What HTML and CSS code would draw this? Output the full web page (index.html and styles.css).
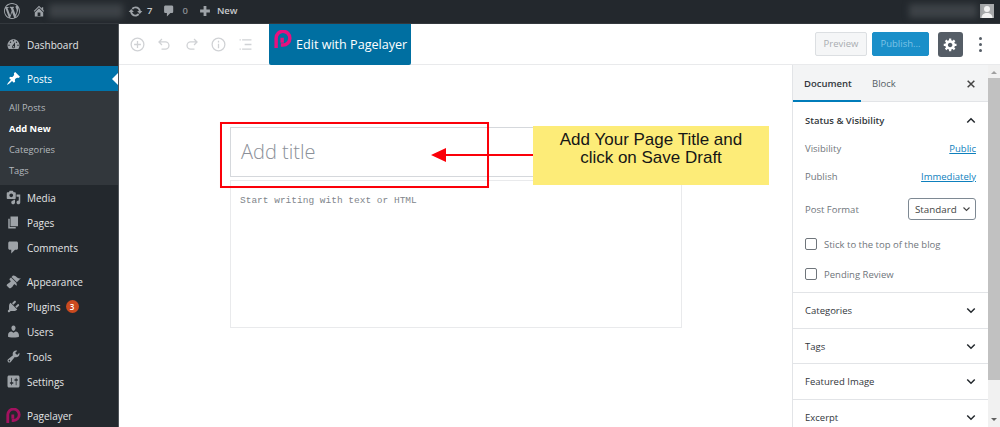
FILE: index.html
```html
<!DOCTYPE html>
<html lang="en">
<head>
<meta charset="utf-8">
<title>Add New Post</title>
<link rel="stylesheet" href="styles.css">
</head>
<body>
<header class="adminbar">
  <svg class="ab-wp" viewBox="0 0 20 20"><path d="M20 10c0-5.51-4.49-10-10-10C4.48 0 0 4.49 0 10c0 5.52 4.48 10 10 10 5.51 0 10-4.48 10-10zM7.78 15.37L4.37 6.22c.55-.02 1.17-.08 1.17-.08.5-.06.44-1.13-.06-1.11 0 0-1.45.11-2.37.11-.18 0-.37 0-.58-.01C4.12 2.69 6.87 1.11 10 1.11c2.33 0 4.45.87 6.05 2.34-.68-.11-1.65.39-1.65 1.58 0 .74.45 1.36.9 2.1.35.61.55 1.36.55 2.46 0 1.49-1.4 5-1.4 5l-3.03-8.37c.54-.02.82-.17.82-.17.5-.05.44-1.25-.06-1.22 0 0-1.44.12-2.38.12-.87 0-2.33-.12-2.33-.12-.5-.03-.56 1.2-.06 1.22l.92.08 1.26 3.41zM17.41 10c.24-.64.74-1.87.43-4.25.7 1.29 1.05 2.71 1.05 4.25 0 3.29-1.73 6.24-4.4 7.78.97-2.59 1.94-5.2 2.92-7.78zM6.1 18.09C3.12 16.65 1.11 13.53 1.11 10c0-1.3.23-2.48.72-3.59C3.25 10.3 4.67 14.2 6.1 18.09zm4.03-6.63l2.58 6.98c-.86.29-1.76.45-2.71.45-.79 0-1.57-.11-2.29-.33.81-2.38 1.62-4.74 2.42-7.1z"/></svg>
  <svg class="ab-home" viewBox="0 0 20 20"><path d="M16 8.5l1.53 1.53-1.06 1.06L10 4.62l-6.47 6.47-1.06-1.06L10 2.5l4 4v-2h2v4zm-6-2.46l6 5.99V18H4v-5.97zM12 17v-5H8v5h4z"/></svg>
  <span class="ab-blur ab-blur-site"></span>
  <svg class="ab-update" viewBox="0 0 20 20"><path d="M10.2 3.28c3.53 0 6.43 2.61 6.92 6h2.08l-3.5 4-3.5-4h2.32c-.45-1.97-2.21-3.45-4.32-3.45-1.45 0-2.73.71-3.54 1.78L4.95 5.66C6.23 4.2 8.11 3.28 10.2 3.28zm-.4 13.44c-3.52 0-6.43-2.61-6.92-6H.8l3.5-4c1.17 1.33 2.33 2.67 3.5 4H5.48c.45 1.97 2.21 3.45 4.32 3.45 1.45 0 2.73-.71 3.54-1.78l1.71 1.95c-1.28 1.46-3.15 2.38-5.25 2.38z"/></svg>
  <span class="ab-text ab-count">7</span>
  <svg class="ab-comment" viewBox="0 0 20 20"><path d="M5 2h9c1.1 0 2 .9 2 2v7c0 1.1-.9 2-2 2h-2l-5 5v-5H5c-1.1 0-2-.9-2-2V4c0-1.1.9-2 2-2z"/></svg>
  <span class="ab-text ab-zero">0</span>
  <svg class="ab-plus" viewBox="0 0 20 20"><path d="M8 3h4v5h5v4h-5v5H8v-5H3V8h5z"/></svg>
  <span class="ab-text ab-new">New</span>
  <span class="ab-spacer"></span>
  <span class="ab-blur ab-blur-user"></span>
  <span class="ab-avatar"><svg viewBox="0 0 14 14"><circle cx="7" cy="5" r="3"/><path d="M1.5 14c0-3.5 2.5-5 5.500-5s5.500 1.500 5.500 5z"/></svg></span>
</header>
<div class="layout">
  <nav class="sidebar">
    <ul class="menu">
      <li class="item item-first"><svg class="mi" viewBox="0 0 20 20"><path d="M3.76 16h12.48c1.1-1.37 1.76-3.11 1.76-5 0-4.420-3.58-8-8-8s-8 3.58-8 8c0 1.89.66 3.63 1.76 5zM10 4c.55 0 1 .45 1 1s-.45 1-1 1-1-.45-1-1 .45-1 1-1zM6 6c.55 0 1 .45 1 1s-.45 1-1 1-1-.45-1-1 .45-1 1-1zm8 0c.55 0 1 .45 1 1s-.45 1-1 1-1-.45-1-1 .45-1 1-1zm-5.370 5.550L12 7v6c0 1.100-.9 2-2 2s-2-.9-2-2c0-.57.24-1.080.63-1.450zM4 10c.55 0 1 .45 1 1s-.45 1-1 1-1-.45-1-1 .45-1 1-1zm12 0c.55 0 1 .45 1 1s-.45 1-1 1-1-.45-1-1 .45-1 1-1zm-5 3c0-.55-.45-1-1-1s-1 .45-1 1 .45 1 1 1 1-.45 1-1z"/></svg>Dashboard</li>
      <li class="item item-active"><svg class="mi" viewBox="0 0 20 20"><path d="M10.440 3.020l1.820-1.820 6.360 6.350-1.830 1.820c-1.050-.68-2.480-.57-3.410.36l-.75.75c-.92.93-1.040 2.350-.35 3.410l-1.830 1.820-2.410-2.410-2.800 2.790c-.42.42-3.380 2.710-3.800 2.290s1.860-3.390 2.280-3.810l2.790-2.790L4.100 9.360l1.830-1.820c1.050.69 2.480.57 3.400-.36l.75-.75c.93-.92 1.050-2.350.36-3.410z"/></svg>Posts</li>
      <li class="submenu">
        <span class="sub">All Posts</span>
        <span class="sub sub-current">Add New</span>
        <span class="sub">Categories</span>
        <span class="sub">Tags</span>
      </li>
      <li class="item"><svg class="mi" viewBox="0 0 20 20"><path d="M13 11V4c0-.55-.45-1-1-1h-1.670L9 1H5L3.670 3H2c-.55 0-1 .45-1 1v7c0 .55.45 1 1 1h10c.55 0 1-.45 1-1zM7 4.500c1.380 0 2.500 1.120 2.500 2.500S8.380 9.500 7 9.500 4.500 8.380 4.500 7 5.620 4.500 7 4.500zM14 6h5v10.500c0 1.380-1.120 2.500-2.500 2.500S14 17.880 14 16.500s1.120-2.500 2.500-2.500c.17 0 .34.02.5.05V9h-3V6zm-4 8.050V13h2v3.500c0 1.380-1.120 2.500-2.500 2.500S7 17.880 7 16.500 8.120 14 9.500 14c.17 0 .34.02.5.05z"/></svg>Media</li>
      <li class="item"><svg class="mi" viewBox="0 0 20 20"><path d="M6 15V2h10v13H6zm-1 1h8v2H3V5h2v11z"/></svg>Pages</li>
      <li class="item"><svg class="mi" viewBox="0 0 20 20"><path d="M5 2h9c1.100 0 2 .9 2 2v7c0 1.100-.9 2-2 2h-2l-5 5v-5H5c-1.100 0-2-.9-2-2V4c0-1.100.9-2 2-2z"/></svg>Comments</li>
      <li class="item item-group"><svg class="mi" viewBox="0 0 20 20"><path d="M14.480 11.060L7.410 3.990l1.500-1.500c.5-.56 2.300-.47 3.510.32 1.210.8 1.430 1.280 2.910 2.100 1.180.64 2.450 1.260 4.450.85zm-.71.71L6.700 4.700 4.930 6.470c-.39.39-.39 1.020 0 1.410l1.060 1.060c.39.39.39 1.030 0 1.420-.6.6-1.430 1.110-2.210 1.690-.35.26-.7.53-1.010.84C1.430 13.230.4 14.850 1.100 15.550l3.360 3.360c.7.7 2.320-.33 3.660-1.670.31-.31.58-.66.84-1.010.58-.78 1.090-1.610 1.690-2.210.39-.39 1.030-.39 1.420 0l1.060 1.060c.39.39 1.020.39 1.410 0z"/></svg>Appearance</li>
      <li class="item"><svg class="mi" viewBox="0 0 20 20"><path d="M13.110 4.360L9.870 7.600 8 5.730l3.240-3.240c.35-.34 1.050-.2 1.560.32.52.51.66 1.210.31 1.550zm-8 1.770l.91-1.120 9.010 9.010-1.190.84c-.71.71-2.630 1.160-3.820 1.160H6.140L4.900 17.260c-.59.59-1.540.59-2.120 0-.59-.58-.59-1.530 0-2.120l1.240-1.240v-3.880c0-1.130.4-3.190 1.090-3.890zm7.260 3.970l3.240-3.240c.34-.35 1.040-.21 1.550.31.52.51.66 1.210.31 1.550l-3.240 3.250z"/></svg>Plugins<span class="badge">3</span></li>
      <li class="item"><svg class="mi" viewBox="0 0 20 20"><path d="M10 9.250c-2.270 0-2.730-3.440-2.730-3.440C7 4.020 7.820 2 9.970 2c2.160 0 2.980 2.020 2.710 3.810 0 0-.41 3.440-2.680 3.440zm0 2.570L12.720 10c2.390 0 4.520 2.330 4.520 4.530v2.490s-3.650 1.130-7.240 1.130c-3.650 0-7.240-1.130-7.240-1.130v-2.490c0-2.250 1.940-4.480 4.470-4.480z"/></svg>Users</li>
      <li class="item"><svg class="mi" viewBox="0 0 20 20"><path d="M16.680 9.770c-1.340 1.340-3.300 1.670-4.950.99l-5.410 6.520c-.99.99-2.590.99-3.580 0s-.99-2.590 0-3.570l6.520-5.420c-.68-1.650-.35-3.610.99-4.950 1.280-1.280 3.120-1.620 4.720-1.060l-2.890 2.890 2.820 2.820 2.860-2.870c.53 1.580.18 3.390-1.080 4.650zM3.810 16.210c.4.39 1.040.39 1.430 0 .4-.4.4-1.040 0-1.430-.39-.4-1.030-.4-1.430 0-.39.39-.39 1.030 0 1.430z"/></svg>Tools</li>
      <li class="item"><svg class="mi" viewBox="0 0 20 20"><path d="M18 16V4c0-1.100-.9-2-2-2H4c-1.100 0-2 .9-2 2v12c0 1.100.9 2 2 2h12c1.100 0 2-.9 2-2zM8 11h1c.55 0 1 .45 1 1s-.45 1-1 1H8v1.500c0 .28-.22.5-.5.5s-.5-.22-.5-.5V13H6c-.55 0-1-.45-1-1s.45-1 1-1h1V5.500c0-.28.22-.5.5-.5s.5.22.5.5V11zm5-2h-1c-.55 0-1-.45-1-1s.45-1 1-1h1V5.500c0-.28.22-.5.5-.5s.5.22.5.5V7h1c.55 0 1 .45 1 1s-.45 1-1 1h-1v5.500c0 .28-.22.5-.5.5s-.5-.22-.5-.5V9z"/></svg>Settings</li>
      <li class="item item-group"><svg class="mi mi-pl" viewBox="0 0 21 21"><path d="M2.500 21V9.500a8 8 0 1 1 8 8H8M9.500 15V9"/></svg>Pagelayer</li>
    </ul>
  </nav>
  <div class="main">
    <div class="toolbar">
      <div class="tools">
        <svg class="ti" viewBox="0 0 20 20"><circle cx="10" cy="10" r="7.500"/><path d="M10 6v8M6 10h8"/></svg>
        <svg class="ti" viewBox="0 0 20 20"><path d="M7 3.500L3.500 7 7 10.500M4 7h7a4 4 0 0 1 0 8.500H6.500"/></svg>
        <svg class="ti" viewBox="0 0 20 20"><path d="M13 3.500L16.500 7 13 10.500M16 7H9a4 4 0 0 0 0 8.500h4.500"/></svg>
        <svg class="ti" viewBox="0 0 20 20"><circle cx="10" cy="10" r="7.500"/><path d="M10 9v5.500M10 5.500v2"/></svg>
        <svg class="ti" viewBox="0 0 20 20"><path d="M6 4.500h11M9 10h8M6 15.500h11M3 4.500h1.500M3 15.500h1.500"/></svg>
      </div>
      <div class="pl-btn">
        <svg class="pl-logo" viewBox="0 0 21 21"><path d="M2.500 21V9.500a8 8 0 1 1 8 8H8M9.500 15V9"/></svg>
        <span class="pl-label">Edit with Pagelayer</span>
      </div>
      <div class="actions">
        <span class="btn-preview">Preview</span>
        <span class="btn-publish">Publish...</span>
        <span class="btn-gear"><svg viewBox="0 0 20 20"><path d="M18 12h-2.180c-.17.7-.44 1.350-.81 1.930l1.540 1.540-2.100 2.100-1.540-1.540c-.58.36-1.230.63-1.910.79V19H8v-2.180c-.68-.16-1.330-.43-1.910-.79l-1.540 1.540-2.120-2.120 1.540-1.540c-.36-.58-.63-1.230-.79-1.910H1V9.030h2.170c.16-.7.44-1.350.8-1.940L2.430 5.550l2.100-2.100 1.540 1.540c.58-.37 1.240-.64 1.930-.81V2h3v2.180c.68.16 1.330.43 1.910.79l1.540-1.540 2.120 2.120-1.540 1.540c.36.59.64 1.240.8 1.940H18V12zm-8.500 1.500c1.660 0 3-1.340 3-3s-1.340-3-3-3-3 1.340-3 3 1.340 3 3 3z"/></svg></span>
        <span class="kebab"><i></i><i></i><i></i></span>
      </div>
    </div>
    <div class="workspace">
      <div class="canvas">
        <div class="post">
          <div class="title-box">Add title</div>
          <div class="body-box">Start writing with text or HTML</div>
        </div>
      </div>
      <aside class="panel">
        <div class="tabs">
          <span class="tab tab-on">Document</span>
          <span class="tab">Block</span>
          <svg class="tabs-x" viewBox="0 0 12 12"><path d="M2 2l8 8M10 2l-8 8"/></svg>
        </div>
        <section class="status">
          <div class="sec-head"><b>Status &amp; Visibility</b><svg class="chev" viewBox="0 0 12 8"><path d="M1.500 6.500L6 2l4.500 4.500"/></svg></div>
          <div class="row row-vis"><span>Visibility</span><a>Public</a></div>
          <div class="row row-pub"><span>Publish</span><a>Immediately</a></div>
          <div class="row row-fmt"><span>Post Format</span><span class="select">Standard<svg viewBox="0 0 12 8"><path d="M2 2l4 4 4-4"/></svg></span></div>
          <div class="check check-1"><i></i>Stick to the top of the blog</div>
          <div class="check check-2"><i></i>Pending Review</div>
        </section>
        <section class="fold"><b>Categories</b><svg class="chev" viewBox="0 0 12 8"><path d="M1.500 1.500L6 6l4.500-4.500"/></svg></section>
        <section class="fold"><b>Tags</b><svg class="chev" viewBox="0 0 12 8"><path d="M1.500 1.500L6 6l4.500-4.500"/></svg></section>
        <section class="fold"><b>Featured Image</b><svg class="chev" viewBox="0 0 12 8"><path d="M1.500 1.500L6 6l4.500-4.500"/></svg></section>
        <section class="fold"><b>Excerpt</b><svg class="chev" viewBox="0 0 12 8"><path d="M1.500 1.500L6 6l4.500-4.500"/></svg></section>
      </aside>
      <div class="scrollbar"><span class="arrow-up"></span><span class="thumb"></span><span class="arrow-down"></span></div>
    </div>
  </div>
</div>
<div class="note-frame"></div>
<svg class="note-arrow" viewBox="0 0 102 14"><path d="M0 7L15 0v6h87v2H15v6z"/></svg>
<div class="note-card">Add Your Page Title and<br>click on Save Draft</div>
</body>
</html>
```
FILE: styles.css
```css
* { box-sizing: border-box; }
html, body { margin: 0; padding: 0; }
body {
  position: relative;
  width: 1000px;
  height: 427px;
  overflow: hidden;
  background: #fff;
  font-family: "Open Sans", "Noto Sans", sans-serif;
  font-size: 10px;
  color: #32373c;
  display: flex;
  flex-direction: column;
}
.adminbar {
  flex: 0 0 24px;
  height: 24px;
  background: #23282d;
  display: flex;
  align-items: center;
  padding: 0 6px 1px 4px;
  fill: #9ea3a8;
  color: #c8cacc;
  border-bottom: 1px solid #33383d;
}
.adminbar svg { display: block; flex: none; }
.ab-wp { width: 16px; height: 16px; margin-right: 12px; }
.ab-home { width: 14px; height: 14px; }
.ab-blur { display: block; background: #3d4247; filter: blur(3px); height: 14px; }
.ab-blur-site { width: 74px; margin: 0 5px 0 3px; }
.ab-update { width: 15px; height: 15px; }
.ab-text { font-size: 9.500px; font-weight: 600; line-height: 12px; }
.ab-count { margin-left: 4px; }
.ab-comment { width: 14px; height: 14px; margin-left: 10px; }
.ab-zero { margin-left: 6px; color: #8a8e92; }
.ab-plus { width: 14px; height: 14px; margin-left: 10px; }
.ab-new { margin-left: 5px; }
.ab-spacer { flex: 1; }
.ab-blur-user { width: 68px; }
.ab-avatar { width: 14px; height: 14px; margin-left: 3px; background: #a8aaac; display: block; }
.ab-avatar svg { width: 14px; height: 14px; fill: #f2f2f2; }

.layout { flex: 1; display: flex; min-height: 0; }
.sidebar { flex: 0 0 119px; background: #23282d; border-right: 1px solid #50555a; color: #e4e5e6; }
.menu { list-style: none; margin: 0; padding: 0; }
.item { height: 25px; display: flex; align-items: center; padding-left: 6px; font-size: 10px; }
.item-first { margin-top: 8px; }
.item-active { background: #0073aa; color: #fff; position: relative; margin-top: 9px; }
.item-active::after {
  content: "";
  position: absolute;
  right: 0;
  top: 7px;
  border: 6px solid transparent;
  border-right-color: #fff;
  border-left-width: 0;
}
.item-group { margin-top: 9px; }
.mi { width: 15px; height: 15px; margin-right: 6px; fill: #9ea3a8; flex: none; }
.item-active .mi { fill: #fff; }
.mi-pl { fill: none; stroke: #a3125f; stroke-width: 4; overflow: hidden; }
.badge {
  width: 13px;
  height: 13px;
  border-radius: 50%;
  background: #ca4a1f;
  color: #fff;
  font-size: 8px;
  font-weight: 600;
  line-height: 13px;
  text-align: center;
  margin-left: 5px;
}
.submenu { background: #32373c; padding: 6.500px 0 3.500px; display: flex; flex-direction: column; color: #b4b9be; }
.sub { height: 21px; line-height: 20px; padding-left: 9px; font-size: 9.300px; }
.sub-current { color: #fff; font-weight: 700; }

.main { flex: 1; min-width: 0; display: flex; flex-direction: column; }
.toolbar { flex: 0 0 41px; display: flex; align-items: stretch; border-bottom: 1px solid #e9eaec; }
.tools { display: flex; align-items: center; gap: 10px; padding-left: 10px; width: 150px; }
.ti { width: 17px; height: 17px; fill: none; stroke: #d0d2d5; stroke-width: 1.500; }
.pl-btn {
  width: 142px;
  margin-bottom: -1px;
  background: #006fa1;
  color: #fff;
  display: flex;
  align-items: center;
  gap: 4px;
  padding-left: 5px;
  border-radius: 0 0 2px 2px;
}
.pl-label { font-size: 12.600px; white-space: nowrap; }
.pl-logo { width: 18px; height: 18px; fill: none; stroke: #e8107f; stroke-width: 4; flex: none; margin-top: -12px; overflow: hidden; }
.actions { flex: 1; display: flex; align-items: center; justify-content: flex-end; }
.btn-preview, .btn-publish {
  height: 24px;
  line-height: 22px;
  text-align: center;
  font-size: 9.500px;
  border-radius: 2px;
}
.btn-preview { width: 52px; background: #f5f6f7; border: 1px solid #dcdfe2; color: #a9adb1; }
.btn-publish { width: 57px; margin-left: 5px; background: #1a8fc9; border: 1px solid #1a8fc9; color: #7dc3e6; }
.btn-gear { width: 25px; height: 25px; margin-left: 9px; background: #555d66; border-radius: 3px; display: flex; align-items: center; justify-content: center; }
.btn-gear svg { width: 15px; height: 15px; fill: #fff; }
.kebab { width: 37px; display: flex; flex-direction: column; align-items: center; gap: 3px; padding-right: 3px; }
.kebab i { width: 3px; height: 3px; border-radius: 50%; background: #555d66; }

.workspace { flex: 1; display: flex; min-height: 0; }
.canvas { flex: 1; min-width: 0; display: flex; justify-content: center; padding-top: 62px; }
.post { width: 452px; }
.title-box {
  height: 50px;
  border: 1px solid #d5d8dc;
  padding-left: 10.500px;
  font-size: 20px;
  font-weight: 300;
  line-height: 47px;
  color: #8b9098;
}
.body-box {
  height: 148px;
  margin-top: 3px;
  border: 1px solid #e9eaec;
  padding: 13px 9.500px;
  font-family: "Liberation Mono", monospace;
  font-size: 9.500px;
  line-height: 14px;
  color: #81868c;
}
.panel { flex: 0 0 196px; border-left: 1px solid #e2e4e7; overflow: hidden; }
.tabs { height: 37px; background: #f3f4f5; border-bottom: 1px solid #e2e4e7; display: flex; align-items: stretch; font-size: 9.500px; position: relative; }
.tab { height: 37px; line-height: 38px; padding: 0 11px; color: #555d66; }
.tab-on { width: 68px; color: #32373c; font-weight: 600; border-bottom: 2px solid #007cba; }
.tab + .tab { padding-left: 11px; }
.tabs-x { position: absolute; right: 12px; top: 14px; width: 10px; height: 10px; fill: none; stroke: #444; stroke-width: 1.800; }
.status { height: 191px; border-bottom: 1px solid #e2e4e7; padding: 0 12px; }
.sec-head { height: 36px; display: flex; align-items: center; justify-content: space-between; font-size: 9.500px; }
.sec-head b, .fold b { font-weight: 500; color: #32373c; }
.sec-head b { font-weight: 600; }
.chev { width: 10px; height: 7px; fill: none; stroke: #23282d; stroke-width: 1.800; }
.row { display: flex; align-items: center; justify-content: space-between; color: #6f757b; font-size: 9.500px; }
.row a { color: #0e80bd; text-decoration: underline; }
.row-vis { height: 18px; margin-top: 1px; }
.row-pub { height: 18px; margin-top: 10px; }
.row-fmt { height: 22px; margin-top: 13px; }
.select { width: 68px; height: 22px; border: 1px solid #7e8993; border-radius: 3px; color: #444; font-size: 9.800px; display: flex; align-items: center; justify-content: space-between; padding: 0 4px 0 6px; }
.select svg { width: 9px; height: 6px; fill: none; stroke: #444; stroke-width: 1.500; }
.check { display: flex; align-items: center; gap: 7px; color: #6f757b; font-size: 9.500px; height: 14px; }
.check i { width: 12px; height: 12px; border: 1px solid #6f757b; border-radius: 2px; flex: none; }
.check-1 { margin-top: 17px; }
.check-2 { margin-top: 16px; }
.fold { height: 35.500px; border-bottom: 1px solid #e2e4e7; padding: 1px 12px 0; display: flex; align-items: center; justify-content: space-between; font-size: 9.500px; }
.scrollbar { flex: 0 0 12px; background: #f1f1f1; display: flex; flex-direction: column; align-items: center; }
.arrow-up { margin-top: 6px; border: 3px solid transparent; border-top: 0; border-bottom: 3px solid #a0a0a0; }
.thumb { width: 100%; height: 302px; margin-top: 4px; background: #c1c1c1; }
.arrow-down { margin-top: 38px; border: 3px solid transparent; border-bottom: 0; border-top-color: #606060; }

.note-frame { position: absolute; left: 220px; top: 122px; width: 269px; height: 66px; border: 2px solid #fb0009; box-shadow: 0 0 0.500px #ff5a5a; }
.note-arrow { position: absolute; left: 431px; top: 148px; width: 102px; height: 14px; fill: #fb0009; }
.note-card {
  position: absolute;
  left: 533px;
  top: 126px;
  width: 236px;
  height: 59px;
  padding-top: 5px;
  background: #fdec78;
  color: #161616;
  font-family: "Liberation Sans", Arial, sans-serif;
  font-size: 17px;
  line-height: 18px;
  text-align: center;
}
```
